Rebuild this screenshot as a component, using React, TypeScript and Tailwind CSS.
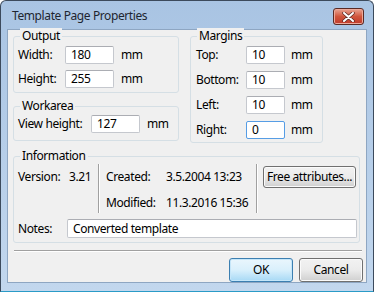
import React from 'react'

const font = { fontFamily: '"Segoe UI", "Noto Sans", Lato, sans-serif' }

function TextBox({ value, className, focused }: { value: string; className: string; focused?: boolean }) {
  return (
    <div
      className={`h-[18px] bg-white border rounded-[2px] pl-[5px] flex items-center text-[12px] text-black ${
        focused ? 'border-[#569de5]' : 'border-[#c5c8ce] border-t-[#abadb3]'
      } ${className}`}
    >
      {value}
    </div>
  )
}

function Group({ title, className, children }: { title: string; className: string; children: React.ReactNode }) {
  return (
    <div className={`relative border border-[#d5dfe5] rounded-[3px] ${className}`}>
      {/* legend sits over the top border */}
      <span className="absolute -top-[9px] left-[6px] px-[2px] bg-[#f0f0f0] leading-[16px]">{title}</span>
      {children}
    </div>
  )
}

function Button({ label, className, isDefault }: { label: string; className: string; isDefault?: boolean }) {
  return (
    <div
      className={`flex items-center justify-center whitespace-nowrap rounded-[3px] border text-[12px] text-black ${
        isDefault
          ? 'border-[#3c7fb1] bg-gradient-to-b from-[#eaf6fd] via-[#d9f0fc] to-[#a7d9f5] shadow-[inset_0_0_0_1px_#c5e6f9]'
          : 'border-[#707070] bg-gradient-to-b from-[#f2f2f2] via-[#ebebeb] to-[#cfcfcf] shadow-[inset_0_0_0_1px_#fbfbfb]'
      } ${className}`}
    >
      {label}
    </div>
  )
}

export default function App() {
  return (
    <div
      style={font}
      className="w-[374px] h-[292px] flex flex-col bg-gradient-to-b from-[#a9c4e3] to-[#c2d7ee] border border-[#3c4a5c] border-b-[#2a9bc7] rounded-t-[6px] text-[12px] tracking-[-0.4px] text-black overflow-hidden"
    >
      {/* Title bar */}
      <div className="h-[28px] flex items-center pl-[11px] pr-[9px] pt-[2px]">
        <span className="text-[12px] text-[#1e2530]">Template Page Properties</span>
        <div className="ml-auto mt-[1px] w-[31px] h-[17px] rounded-[3px] border border-[#5a2a24] bg-gradient-to-b from-[#e8a493] via-[#d0553c] to-[#c0392b] flex items-center justify-center shadow-[inset_0_0_0_1px_#eda99a]">
          <svg width="13" height="10" viewBox="0 0 13 10">
            <path d="M2 1 L11 9 M11 1 L2 9" stroke="#5a2a24" strokeWidth="3.4" strokeLinecap="round" />
            <path d="M2 1 L11 9 M11 1 L2 9" stroke="#ffffff" strokeWidth="2" strokeLinecap="round" />
          </svg>
        </div>
      </div>

      {/* Client area */}
      <div className="mx-[6px] h-[254px] bg-[#f0f0f0] border border-[#8ea6c2] pl-[5px] pt-[6px] flex flex-col">
        <div className="flex">
          <div className="flex flex-col w-[166px]">
            <Group title="Output" className="h-[57px] pt-[9px] pl-[4px]">
              <div className="flex flex-col gap-[6px]">
                <div className="flex items-center">
                  <span className="w-[47px]">Width:</span>
                  <TextBox value="180" className="w-[49px]" />
                  <span className="ml-[7px]">mm</span>
                </div>
                <div className="flex items-center">
                  <span className="w-[47px]">Height:</span>
                  <TextBox value="255" className="w-[49px]" />
                  <span className="ml-[7px]">mm</span>
                </div>
              </div>
            </Group>
            <Group title="Workarea" className="mt-[13px] h-[35px] pt-[8px] pl-[4px]">
              <div className="flex items-center">
                <span className="w-[73px]">View height:</span>
                <TextBox value="127" className="w-[49px]" />
                <span className="ml-[7px]">mm</span>
              </div>
            </Group>
          </div>

          <Group title="Margins" className="ml-[11px] w-[133px] h-[107px] pt-[9px] pl-[5px]">
            <div className="flex flex-col gap-[7px]">
              {[
                ['Top:', '10'],
                ['Bottom:', '10'],
                ['Left:', '10'],
                ['Right:', '0'],
              ].map(([label, v], i) => (
                <div key={label} className="flex items-center">
                  <span className="w-[50px]">{label}</span>
                  <TextBox value={v} className="w-[39px]" focused={i === 3} />
                  <span className="ml-[6px]">mm</span>
                </div>
              ))}
            </div>
          </Group>
        </div>

        <Group title="Information" className="mt-[13px] w-[347px] h-[87px] pt-[7px] pl-[4px]">
          <div className="flex h-[49px]">
            <div className="w-[80px] flex pt-[5px] leading-[16px]">
              <span className="w-[51px]">Version:</span>
              <span>3.21</span>
            </div>
            <div className="w-px bg-[#a0a0a0] border-r border-white box-content" />
            <div className="ml-[6px] w-[150px] flex flex-col pt-[5px] gap-[10px] leading-[16px]">
              <div className="flex">
                <span className="w-[60px]">Created:</span>
                <span>3.5.2004 13:23</span>
              </div>
              <div className="flex">
                <span className="w-[60px]">Modified:</span>
                <span>11.3.2016 15:36</span>
              </div>
            </div>
            <div className="w-px bg-[#a0a0a0] border-r border-white box-content" />
            <Button label="Free attributes..." className="ml-[5px] mt-[2px] w-[93px] h-[22px]" />
          </div>
          <div className="flex items-center mt-[6px]">
            <span className="w-[49px]">Notes:</span>
            <TextBox value="Converted template" className="w-[290px] h-[19px]" />
          </div>
        </Group>

        <div className="mt-[7px] ml-[1px] mr-[4px] h-0 border-t border-[#a0a0a0] border-b border-b-white box-content" />

        <div className="mt-[6px] flex justify-end gap-[6px] pr-[3px]">
          <Button label="OK" className="w-[64px] h-[24px]" isDefault />
          <Button label="Cancel" className="w-[64px] h-[24px]" />
        </div>
      </div>
    </div>
  )
}
